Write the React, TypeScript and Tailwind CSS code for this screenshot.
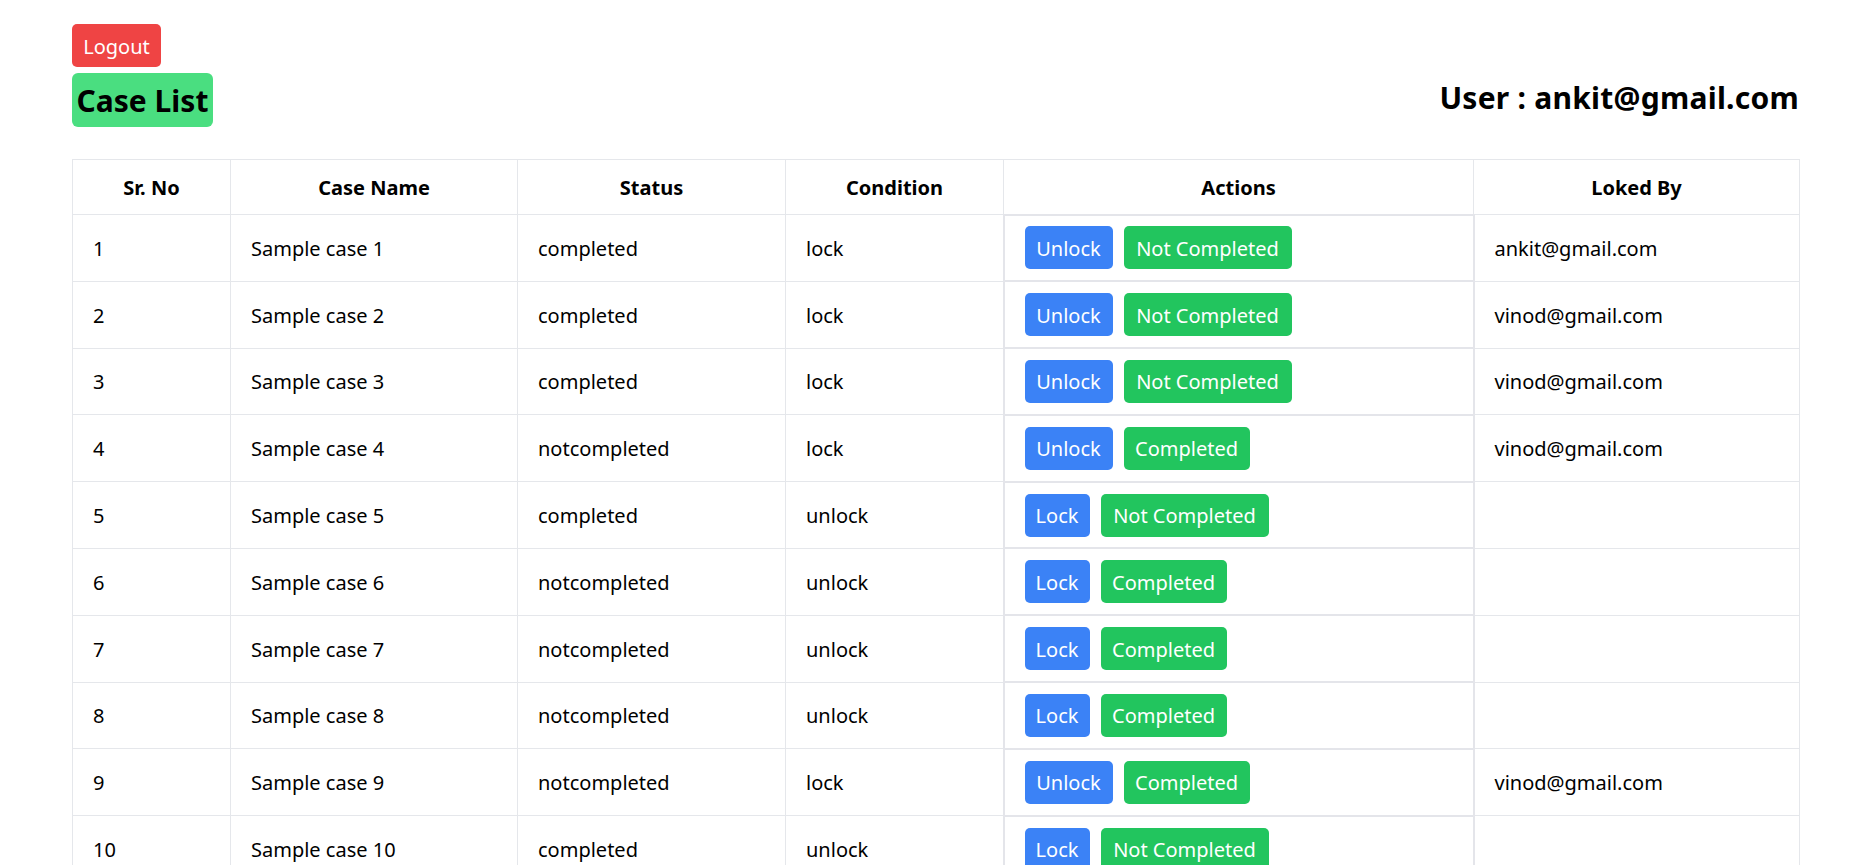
import React from "react";

type Row = {
  id: number;
  status: string;
  condition: string;
  lockedBy: string;
};

const rows: Row[] = [
  { id: 1, status: "completed", condition: "lock", lockedBy: "ankit@gmail.com" },
  { id: 2, status: "completed", condition: "lock", lockedBy: "vinod@gmail.com" },
  { id: 3, status: "completed", condition: "lock", lockedBy: "vinod@gmail.com" },
  { id: 4, status: "notcompleted", condition: "lock", lockedBy: "vinod@gmail.com" },
  { id: 5, status: "completed", condition: "unlock", lockedBy: "" },
  { id: 6, status: "notcompleted", condition: "unlock", lockedBy: "" },
  { id: 7, status: "notcompleted", condition: "unlock", lockedBy: "" },
  { id: 8, status: "notcompleted", condition: "unlock", lockedBy: "" },
  { id: 9, status: "notcompleted", condition: "lock", lockedBy: "vinod@gmail.com" },
  { id: 10, status: "completed", condition: "unlock", lockedBy: "" },
];

export default function App() {
  return (
    <div className="min-h-screen bg-white pt-[24px] pl-[72px] font-['Noto_Sans',sans-serif] text-black">
      <div className="w-[1727px]">
        <div className="flex items-end justify-between">
          <div className="flex flex-col items-start gap-[6px]">
            <button className="flex h-[43px] w-[89px] items-center justify-center rounded-[5px] bg-[#ef4444] pt-[2px] text-[20px] leading-[30px] text-white">
              Logout
            </button>
            <h1 className="h-[54px] w-[141px] overflow-visible whitespace-nowrap rounded-[6px] bg-[#4ade80] text-center text-[30px] font-bold leading-[56px]">
              Case List
            </h1>
          </div>
          <h2 className="mb-[9.5px] text-[30px] font-bold leading-[40px] tracking-[0.25px]">User : ankit@gmail.com</h2>
        </div>

        <table className="mt-[32px] w-full table-fixed border-collapse text-[20px] leading-[30px]">
          <colgroup>
            <col className="w-[158px]" />
            <col className="w-[287px]" />
            <col className="w-[268px]" />
            <col className="w-[218px]" />
            <col className="w-[470px]" />
            <col className="w-[326px]" />
          </colgroup>
          <thead>
            <tr className="h-[55px]">
              {["Sr. No", "Case Name", "Status", "Condition", "Actions", "Loked By"].map((h) => (
                <th key={h} className="border border-[#e5e7eb] px-5 pt-[2px] text-center font-bold">
                  {h}
                </th>
              ))}
            </tr>
          </thead>
          <tbody>
            {rows.map((r) => {
              const locked = r.condition === "lock";
              const done = r.status === "completed";
              return (
                <tr key={r.id} className="h-[66.8px]">
                  <td className="border border-[#e5e7eb] px-5 pt-[2px]">{r.id}</td>
                  <td className="border border-[#e5e7eb] px-5 pt-[2px]">Sample case {r.id}</td>
                  <td className="border border-[#e5e7eb] px-5 pt-[2px]">{r.status}</td>
                  <td className="border border-[#e5e7eb] px-5 pt-[2px]">{r.condition}</td>
                  <td className="border-2 border-[#e4e5ea] px-5">
                    <div className="flex items-center gap-[11px]">
                      <button
                        className={
                          locked
                            ? "flex h-[43px] w-[88px] items-center justify-center rounded-[5px] bg-[#3b82f6] pt-[2px] text-white"
                            : "flex h-[43px] w-[65px] items-center justify-center rounded-[5px] bg-[#3b82f6] pt-[2px] text-white"
                        }
                      >
                        {locked ? "Unlock" : "Lock"}
                      </button>
                      <button
                        className={
                          done
                            ? "flex h-[43px] w-[168px] items-center justify-center whitespace-nowrap rounded-[5px] bg-[#22c55e] pt-[2px] text-white"
                            : "flex h-[43px] w-[126px] items-center justify-center whitespace-nowrap rounded-[5px] bg-[#22c55e] pt-[2px] text-white"
                        }
                      >
                        {done ? "Not Completed" : "Completed"}
                      </button>
                    </div>
                  </td>
                  <td className="border border-[#e5e7eb] px-5 pt-[2px]">{r.lockedBy}</td>
                </tr>
              );
            })}
          </tbody>
        </table>
      </div>
    </div>
  );
}
